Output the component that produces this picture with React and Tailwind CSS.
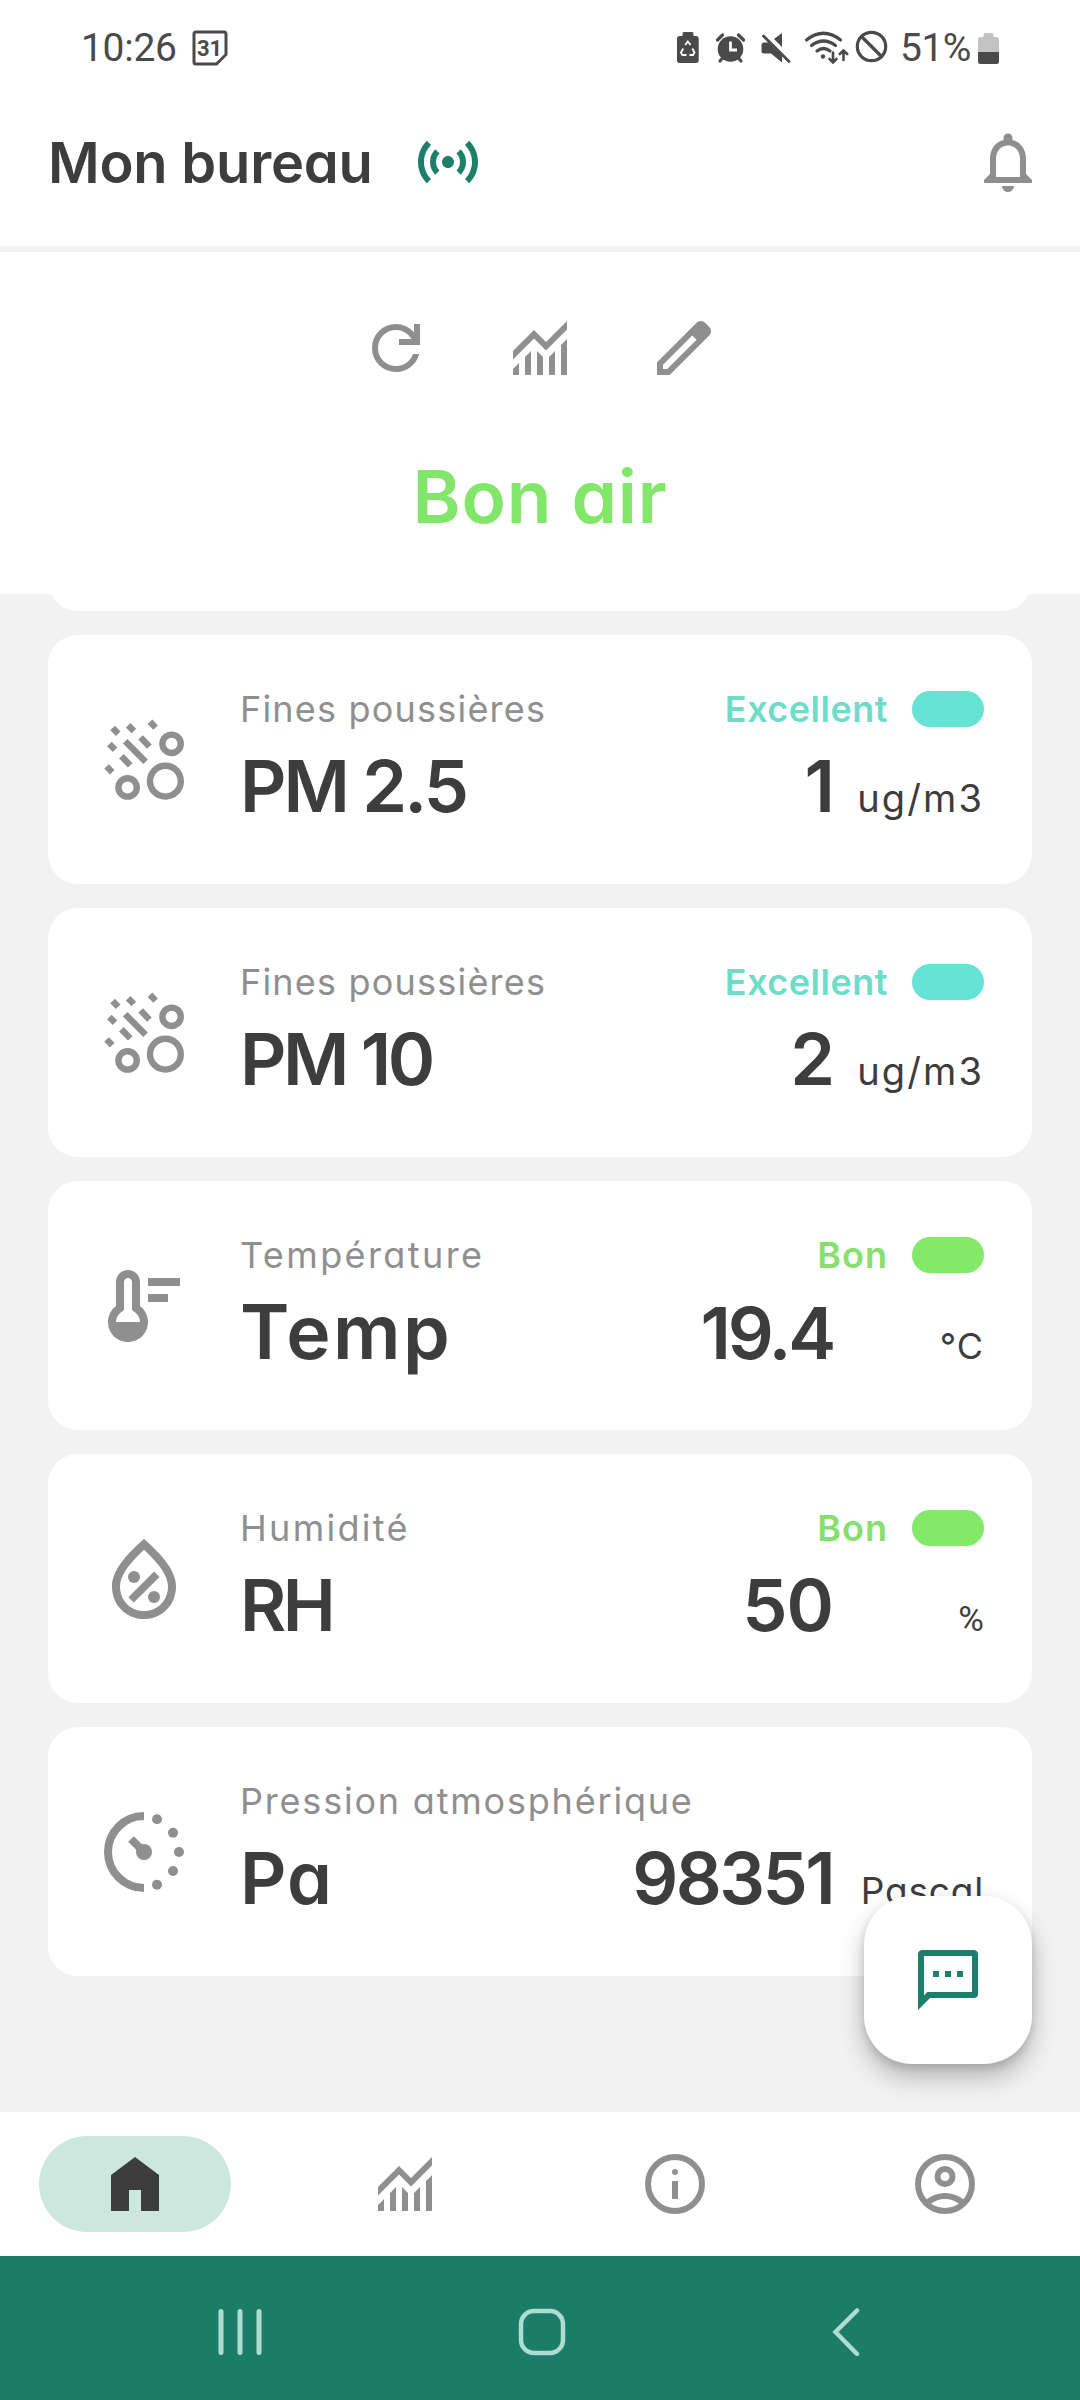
import React from 'react';

const MONITORING =
  'M3 21v-2l2-2v4H3zm4 0v-6l2-2v8H7zm4 0v-8l2 2.025V21h-2zm4 0v-5.975l2-2V21h-2zm4 0V11l2-2v12h-2zM3 15.825V13l7-7 4 4 7-7v2.825l-7 7-4-4-7 7z';

// 24x24 filled icon
const Icon = ({ d, className = 'size-[72px]', children }) => (
  <svg viewBox="0 0 24 24" className={`${className} shrink-0 fill-current`}>
    {d && <path d={d} fillRule="evenodd" />}
    {children}
  </svg>
);

const DustIcon = () => (
  <Icon className="size-24 text-[#8f8f8f]">
    <g fill="none" stroke="currentColor" strokeWidth="1.6">
      <circle cx="18.9" cy="7.95" r="2.3" />
      <circle cx="17.35" cy="17.3" r="3.85" />
      <circle cx="7.9" cy="18.85" r="2.3" />
      <path d="M7.3 7.3l5.1 5.15M11.15 6.35l2.2 2.3M6.35 11.05l2.2 2.3M13.5 2.45l1.4 1.45M8.05 3.3l1.4 1.45M4.15 4l1.4 1.45M3.35 8l1.4 1.45M2.65 13.6l1.4 1.45" />
    </g>
  </Icon>
);

const TempIcon = () => (
  <Icon
    className="size-24 text-[#8f8f8f]"
    d="M11 12V6c0-1.66-1.34-3-3-3S5 4.34 5 6v6c-1.21.91-2 2.37-2 4 0 2.76 2.24 5 5 5s5-2.24 5-5c0-1.63-.79-3.09-2-4zM5 16c0-.94.45-1.84 1.2-2.4L7 13V6c0-.55.45-1 1-1s1 .45 1 1v7l.8.6c.75.57 1.2 1.46 1.2 2.4H5zM13 5h8v2h-8zM13 9h5v2h-5z"
  />
);

const HumidityIcon = () => (
  <Icon
    className="size-24 text-[#8f8f8f]"
    d="M12 2c-5.33 4.55-8 8.48-8 11.8 0 4.98 3.8 8.2 8 8.2s8-3.22 8-8.2c0-3.32-2.67-7.25-8-11.8zm0 18c-3.35 0-6-2.57-6-6.2 0-2.34 1.95-5.44 6-9.14 4.05 3.7 6 6.79 6 9.14 0 3.63-2.65 6.2-6 6.2z"
  >
    <circle cx="9.5" cy="11.5" r="1.5" />
    <circle cx="14.5" cy="16.5" r="1.5" />
    <path d="M8.77 17.23l6.43-6.43" stroke="currentColor" strokeWidth="1.9" />
  </Icon>
);

const PressureIcon = () => (
  <Icon className="size-24 text-[#8f8f8f]">
    <path d="M12 3a9 9 0 0 0 0 18M8.75 8.75L12 12" fill="none" stroke="currentColor" strokeWidth="2" />
    <circle cx="12" cy="12" r="2" />
    <circle cx="15.25" cy="3.8" r="1.25" />
    <circle cx="19.25" cy="7.2" r="1.25" />
    <circle cx="20.75" cy="12" r="1.25" />
    <circle cx="19.25" cy="16.75" r="1.25" />
    <circle cx="15.25" cy="20.2" r="1.25" />
  </Icon>
);

const LEVELS = {
  excellent: { label: 'Excellent', text: 'text-[#6edccb] tracking-[0.5px]', pill: 'bg-[#66e3d4]' },
  good: { label: 'Bon', text: 'text-[#86e070] tracking-[1px]', pill: 'bg-[#84e868]' },
};

const SENSORS = [
  {
    icon: DustIcon,
    label: 'Fines poussières',
    labelClass: 'tracking-[1.2px]',
    name: 'PM 2.5',
    nameClass: 'text-[72px] tracking-[-2.9px]',
    value: '1',
    valueClass: 'tracking-[-2px]',
    unit: 'ug/m3',
    unitClass: 'text-[38px] tracking-[2.1px]',
    level: 'excellent',
  },
  {
    icon: DustIcon,
    label: 'Fines poussières',
    labelClass: 'tracking-[1.2px]',
    name: 'PM 10',
    nameClass: 'text-[72px] tracking-[-3.4px]',
    value: '2',
    valueClass: 'tracking-[-2px]',
    unit: 'ug/m3',
    unitClass: 'text-[38px] tracking-[2.1px]',
    level: 'excellent',
  },
  {
    icon: TempIcon,
    label: 'Température',
    labelClass: 'tracking-[2.4px]',
    name: 'Temp',
    nameClass: 'text-[75px] tracking-[2.5px]',
    value: '19.4',
    valueClass: 'tracking-[-3.2px]',
    unit: '°C',
    unitClass: 'text-[36px] tracking-[1px]',
    level: 'good',
  },
  {
    icon: HumidityIcon,
    label: 'Humidité',
    labelClass: 'tracking-[2.3px]',
    name: 'RH',
    nameClass: 'text-[71px] tracking-[-3.5px]',
    value: '50',
    valueClass: 'tracking-[-1px]',
    unit: '%',
    unitClass: 'font-[Roboto,sans-serif] text-[35px]',
    level: 'good',
  },
  {
    icon: PressureIcon,
    label: 'Pression atmosphérique',
    labelClass: 'tracking-[1.8px]',
    name: 'Pa',
    nameClass: 'text-[72px] tracking-[1px]',
    value: '98351',
    valueClass: 'tracking-[-2.6px]',
    unit: 'Pascal',
    unitClass: 'text-[37px] tracking-[0.8px]',
  },
];

const SensorCard = ({ sensor }) => {
  const level = LEVELS[sensor.level];
  const SensorIcon = sensor.icon;

  return (
    <div className="flex h-[249px] shrink-0 items-center rounded-[30px] bg-white px-12">
      <SensorIcon />
      <div className="ml-12 flex h-full flex-1 flex-col pt-[47px]">
        <div className="flex h-[53px] items-center justify-between">
          <span className={`text-[36px] whitespace-nowrap text-[#8f8f8f] ${sensor.labelClass}`}>{sensor.label}</span>
          {level && (
            <div className="flex items-center gap-6">
              <span className={`text-[36px] font-semibold ${level.text}`}>{level.label}</span>
              <span className={`h-9 w-[72px] rounded-full ${level.pill}`} />
            </div>
          )}
        </div>
        <div className="mt-[11px] flex h-20 items-baseline text-[#3d3d3d]">
          <span className={`leading-[80px] font-semibold ${sensor.nameClass}`}>{sensor.name}</span>
          <span className={`ml-auto text-[72px] leading-[80px] font-semibold ${sensor.valueClass}`}>{sensor.value}</span>
          <span className={`w-[151px] text-right ${sensor.unitClass}`}>{sensor.unit}</span>
        </div>
      </div>
    </div>
  );
};

const StatusBar = () => (
  <div className="flex h-24 items-center px-[81px] font-[Roboto,sans-serif] text-[#4a4a4a]">
    <span className="text-[39px] leading-none tracking-[-0.3px]">10:26</span>
    {/* calendar notification */}
    <svg viewBox="0 0 36 36" className="ml-[15px] size-9 overflow-visible">
      <path d="M4 2h28a2 2 0 0 1 2 2v20.500L24.500 34H4a2 2 0 0 1-2-2V4a2 2 0 0 1 2-2z" fill="none" stroke="currentColor" strokeWidth="3" />
      <text x="17.500" y="25.500" textAnchor="middle" className="fill-current text-[22px] font-bold">31</text>
    </svg>

    <svg viewBox="677 30 212 36" className="ml-auto h-9 w-[212px] overflow-visible" fill="currentColor">
      {/* battery protection */}
      <path d="M684 32h8q1.500 0 1.500 2v2h2.500q2.700 0 2.700 2.700v21.600q0 2.700-2.700 2.700h-16.300q-2.700 0-2.700-2.700V38.700q0-2.700 2.700-2.700h2.800v-2q0-2 1.500-2z" />
      <path d="M685.200 45l2.600-3.500 2.700 3.500M692.300 48.500l2.200 4-1.500 2.500h-3.500M686.500 55h-4.200l-1.300-2.500 2.200-4" fill="none" stroke="white" strokeWidth="1.800" />
      {/* alarm */}
      <circle cx="730.500" cy="49" r="12.800" />
      <path d="M717.500 40l5-5M743.500 40l-5-5M720 61l3-3.500M741 61l-3-3.500" stroke="currentColor" strokeWidth="3.200" strokeLinecap="round" />
      <path d="M730.500 41.500v8.500h6.500" fill="none" stroke="white" strokeWidth="2.800" />
      {/* sound off */}
      <path d="M782 33v14l-8-8zM761.500 45q0-2.500 2.500-2.500h4.500L782 56v6.500L771 53.500h-7q-2.500 0-2.500-2.500z" />
      <path d="M763.500 36l25.500 25.500" stroke="currentColor" strokeWidth="2.800" strokeLinecap="round" />
      {/* wifi */}
      <g fill="none" stroke="currentColor" strokeWidth="3.200" strokeLinecap="round">
        <path d="M806.500 40q17-13.500 34 0M811.500 45.500q12-9 24 0M817 51q6.500-5 13 0" />
        <path d="M833 52.500v9.500M829.500 59l3.500 3.500 3.500-3.500M843.500 60v-8.500M839.800 54l3.700-3.500 3.700 3.500" strokeWidth="2.600" />
        <circle cx="871.500" cy="46.500" r="14.200" />
        <path d="M861.500 36.500l20 20" />
      </g>
      <circle cx="823" cy="56.500" r="2.200" />
    </svg>
    <span className="ml-[11px] w-[78px] text-[39px] leading-none tracking-[-0.5px]">51%</span>
    <svg viewBox="0 0 21 31" className="h-[31px] w-[21px]">
      <path d="M7 0h7q1.500 0 1.500 2v2h3q2.500 0 2.500 2.500V19H0V6.500Q0 4 2.500 4h3V2Q5.500 0 7 0z" fill="#c2c2c2" />
      <path d="M0 19h21v9.500q0 2.500-2.500 2.500h-16Q0 31 0 28.500z" fill="currentColor" />
    </svg>
  </div>
);

const Header = () => (
  <div className="flex h-[156px] items-start border-b-[6px] border-[#f2f2f2] pt-[30px] pr-9 pl-12">
    <h1 className="w-[364px] pt-px text-[56px] leading-[72px] font-semibold tracking-[-0.2px] whitespace-nowrap text-[#3d3d3d]">Mon bureau</h1>
    <Icon
      className="size-[72px] text-[#1b7f69]"
      d="M7.760 16.240C6.670 15.160 6 13.660 6 12s.67-3.160 1.760-4.240l1.420 1.420C8.450 9.900 8 10.900 8 12c0 1.100.45 2.100 1.170 2.830l-1.410 1.410zm8.480 0C17.330 15.160 18 13.660 18 12s-.67-3.160-1.760-4.240l-1.420 1.420C15.550 9.900 16 10.900 16 12c0 1.100-.45 2.100-1.170 2.830l1.410 1.410zM12 10c-1.100 0-2 .9-2 2s.9 2 2 2 2-.9 2-2-.9-2-2-2zm8 2c0 2.210-.9 4.210-2.350 5.650l1.420 1.420C20.880 17.260 22 14.760 22 12s-1.120-5.260-2.930-7.070l-1.420 1.420C19.100 7.790 20 9.790 20 12zM6.350 6.350 4.930 4.930C3.120 6.740 2 9.240 2 12s1.120 5.260 2.930 7.070l1.420-1.420C4.900 16.210 4 14.210 4 12s.9-4.210 2.350-5.650z"
    />
    <Icon
      className="ml-auto size-[72px] text-[#8f8f8f]"
      d="M12 22c1.100 0 2-.9 2-2h-4c0 1.100.89 2 2 2zm6-6v-5c0-3.070-1.640-5.640-4.500-6.320V4c0-.83-.67-1.500-1.500-1.500s-1.500.67-1.500 1.500v.68C7.630 5.360 6 7.920 6 11v5l-2 2v1h16v-1l-2-2zm-2 1H8v-6c0-2.480 1.510-4.500 4-4.500s4 2.020 4 4.500v6z"
    />
  </div>
);

const Summary = () => (
  <div className="flex h-[342px] flex-col items-center pt-[60px]">
    <div className="flex gap-[72px] text-[#8f8f8f]">
      <Icon d="M12 20q-3.350 0-5.675-2.325Q4 15.350 4 12q0-3.350 2.325-5.675Q8.650 4 12 4q1.725 0 3.300.712 1.575.713 2.700 2.038V4h2v7h-7V9h4.200q-.8-1.400-2.187-2.200Q13.625 6 12 6 9.500 6 7.750 7.750T6 12q0 2.500 1.750 4.250T12 18q1.925 0 3.475-1.100T17.650 14h2.100q-.7 2.650-2.850 4.325Q14.750 20 12 20Z" />
      <Icon d={MONITORING} />
      <Icon d="M5 19h1.425L16.200 9.225 14.775 7.800 5 17.575V19zm-2 2v-4.250L16.200 3.575q.3-.275.663-.425t.762-.15.775.15.650.45L20.425 5q.3.275.438.65T21 6.400q0 .4-.137.763t-.438.662L7.250 21H3z" />
    </div>
    <p className="mt-[73px] text-[73px] leading-[80px] font-semibold tracking-[0.8px] text-[#82e66a]">Bon air</p>
  </div>
);

const TabBar = () => (
  <div className="grid h-36 shrink-0 grid-cols-4 place-items-center bg-white text-[#8f8f8f]">
    <div className="flex h-24 w-48 items-center justify-center rounded-full bg-[#cce8de] text-[#3d3d3d]">
      <Icon d="M4 21V9l8-6 8 6v12h-6v-7h-4v7z" />
    </div>
    <Icon d={MONITORING} />
    <Icon>
      <circle cx="12" cy="12" r="9" fill="none" stroke="currentColor" strokeWidth="2" />
      <circle cx="12" cy="8" r="1" />
      <path d="M11 11h2v6h-2z" />
    </Icon>
    <Icon d="M5.850 17.100q1.275-.975 2.850-1.537Q10.275 15 12 15q1.725 0 3.300.563 1.575.562 2.850 1.537.875-1.025 1.363-2.325Q20 13.475 20 12q0-3.325-2.337-5.663Q15.325 4 12 4T6.338 6.337Q4 8.675 4 12q0 1.475.487 2.775.488 1.300 1.363 2.325ZM12 13q-1.475 0-2.488-1.012Q8.500 10.975 8.500 9.500t1.012-2.488Q10.525 6 12 6t2.488 1.012Q15.500 8.025 15.500 9.500t-1.012 2.488Q13.475 13 12 13Zm0 9q-2.075 0-3.900-.788-1.825-.787-3.175-2.137-1.350-1.350-2.137-3.175Q2 14.075 2 12t.788-3.900q.787-1.825 2.137-3.175 1.350-1.350 3.175-2.138Q9.925 2 12 2t3.900.787q1.825.788 3.175 2.138 1.350 1.350 2.137 3.175Q22 9.925 22 12t-.788 3.900q-.787 1.825-2.137 3.175-1.350 1.350-3.175 2.137Q14.075 22 12 22Zm0-2q1.325 0 2.500-.387 1.175-.388 2.150-1.113-.975-.725-2.150-1.113Q13.325 17 12 17t-2.500.387q-1.175.388-2.150 1.113.975.725 2.150 1.113Q10.675 20 12 20Zm0-9q.65 0 1.075-.425.425-.425.425-1.075 0-.65-.425-1.075Q12.650 8 12 8q-.65 0-1.075.425Q10.500 8.850 10.500 9.500q0 .65.425 1.075Q11.350 11 12 11Z" />
  </div>
);

// Android navigation buttons
const SystemBar = () => (
  <div className="flex h-36 shrink-0 items-center bg-[#1b7d68] pt-2 pr-[219px] pl-[218px]">
    <svg viewBox="0 0 44 48" className="h-12 w-11" fill="none" stroke="#aedcd1" strokeWidth="5" strokeLinecap="round">
      <path d="M3 3.500v41M22 3.500v41M41 3.500v41" />
    </svg>
    <svg viewBox="0 0 48 48" className="ml-64 size-12" fill="none" stroke="#aedcd1" strokeWidth="4.500">
      <rect x="3" y="3" width="42" height="42" rx="13" />
    </svg>
    <svg viewBox="0 0 30 48" className="ml-auto h-12 w-[30px]" fill="none" stroke="#aedcd1" strokeWidth="4.500" strokeLinecap="round">
      <path d="M26 2.500L4.500 24 26 46" />
    </svg>
  </div>
);

const App = () => {
  return (
    <div className="relative flex h-[2400px] w-[1080px] flex-col overflow-hidden bg-white font-['Inter','Noto_Sans',sans-serif] [font-feature-settings:'cv11']">
      <StatusBar />
      <Header />
      <Summary />

      <div className="flex h-[1518px] shrink-0 flex-col gap-6 overflow-hidden bg-[#f2f2f2] px-12">
        {/* previous card, scrolled mostly out of view */}
        <div className="-mt-[232px] h-[249px] shrink-0 rounded-[30px] bg-white" />
        {SENSORS.map((sensor) => (
          <SensorCard key={sensor.name} sensor={sensor} />
        ))}
      </div>

      <TabBar />
      <SystemBar />

      <button className="absolute right-12 bottom-[336px] flex size-[168px] items-center justify-center rounded-[48px] bg-white text-[#1b7f69] shadow-[0_14px_26px_rgba(0,0,0,0.24),0_4px_10px_rgba(0,0,0,0.14)]">
        <Icon d="M20.500 2H3.500Q2 2 2 3.500V22l4-4h14.500q1.500 0 1.500-1.500v-13Q22 2 20.500 2zM20 16H5.150L4 17.125V4h16v12zM7 9h2v2H7zM11 9h2v2h-2zM15 9h2v2h-2z" />
      </button>
    </div>
  );
};

export default App;
